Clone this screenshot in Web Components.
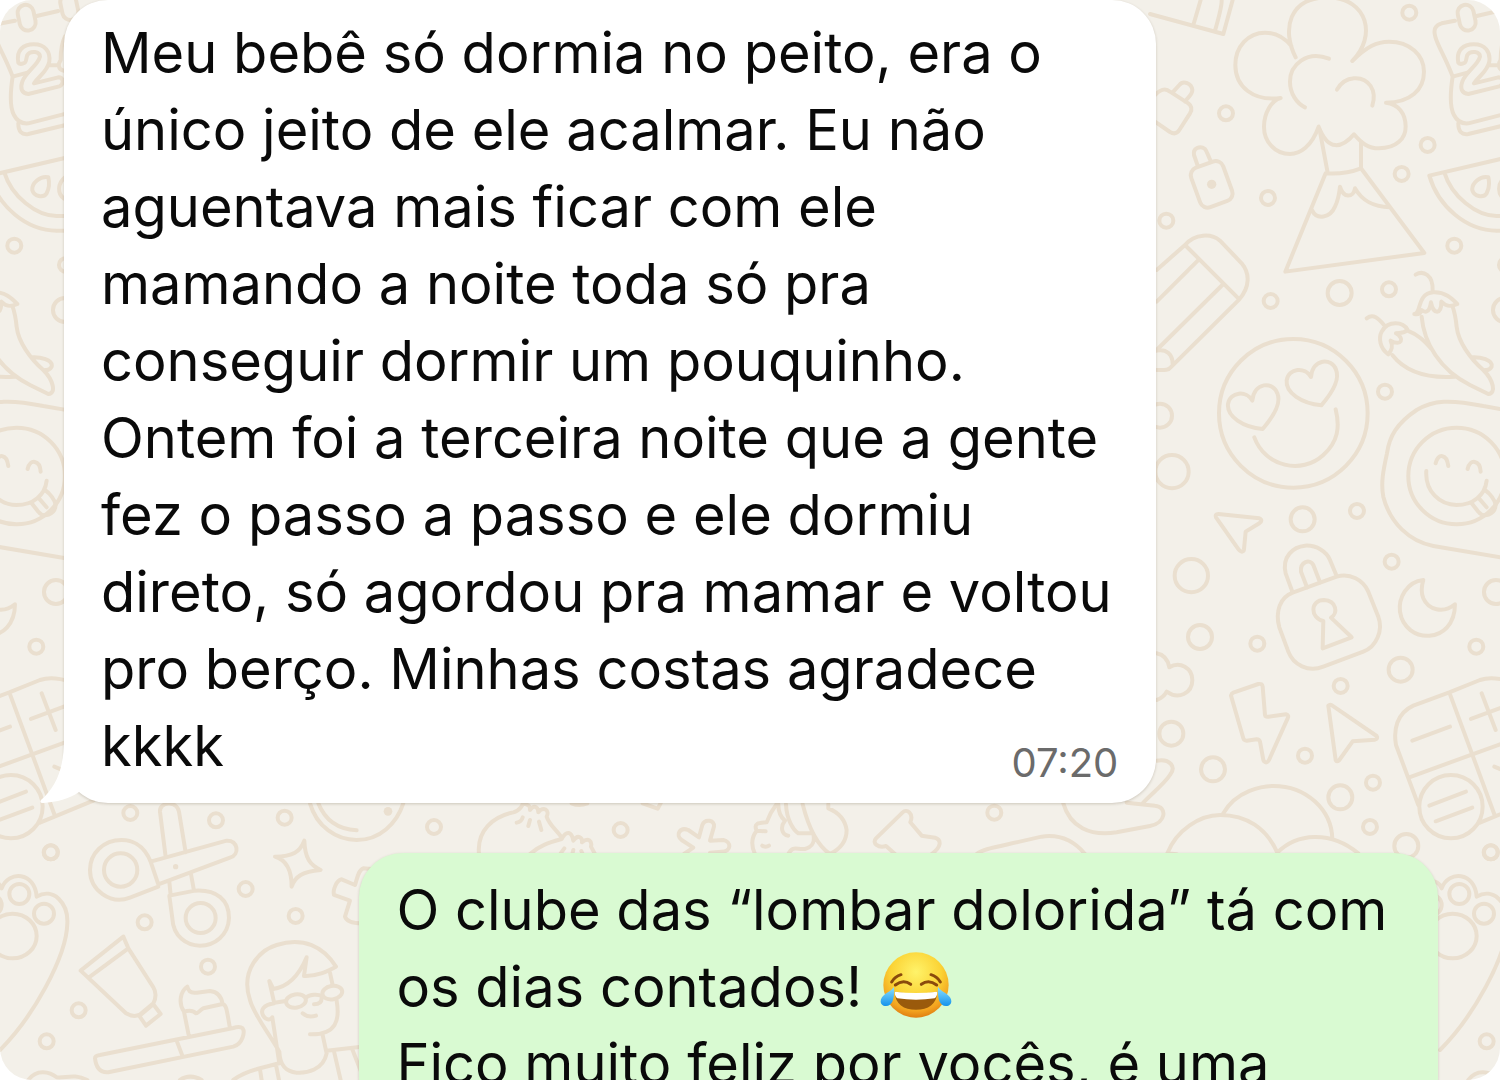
<!DOCTYPE html>
<html lang="pt-BR">
<head>
<meta charset="utf-8">
<meta name="viewport" content="width=device-width, initial-scale=1">
<title>Conversa</title>
<style>
body {
  margin: 0;
  background: #ffffff;
  font-family: Inter, "Liberation Sans", sans-serif;
}
</style>
</head>
<body>
<chat-screen>
  <chat-message side="in" time="07:20">Meu bebê só dormia no peito, era o
único jeito de ele acalmar. Eu não
aguentava mais ficar com ele
mamando a noite toda só pra
conseguir dormir um pouquinho.
Ontem foi a terceira noite que a gente
fez o passo a passo e ele dormiu
direto, só agordou pra mamar e voltou
pro berço. Minhas costas agradece
kkkk</chat-message>
  <chat-message side="out">O clube das “lombar dolorida” tá com
os dias contados! <joy-emoji></joy-emoji>
Fico muito feliz por vocês, é uma</chat-message>
</chat-screen>

<template id="wallpaper-template">
<style>
:host {
  display: block;
  position: absolute;
  inset: 0;
  overflow: hidden;
}

svg {
  display: block;
  width: 100%;
  height: 100%;
}

.doodles {
  fill: none;
  stroke: #eadfcf;
  stroke-width: 12;
  stroke-linecap: round;
  stroke-linejoin: round;
}

.dot {
  fill: #eadfcf;
  stroke: none;
}
</style>
<svg aria-hidden="true">
  <defs>
    <g id="tile" class="doodles">
      <!-- cloud, volcano, calendar, watermelon -->
      <g transform="translate(1150 0) scale(.3333)">
        <path d="M0 42L220 102L248 0M152 0L130 75M215 0Q216 20 195 92"/>
        <path d="M437 172C395 90 415 -8 535 -8C655 -5 680 110 607 183C650 140 680 125 717 125C780 125 822 165 822 215C822 270 780 308 708 308C745 312 767 340 767 380C767 415 740 445 687 445C655 445 635 430 612 403C575 445 535 455 506 380C485 440 450 462 420 462C375 462 342 425 342 380C342 340 365 300 392 294C310 305 256 260 256 195C256 140 295 98 345 98C380 98 405 115 424 138"/>
        <path d="M537 176C470 150 420 195 420 245C420 280 440 310 465 322M561 269C585 225 640 225 662 258C675 278 674 295 667 317"/>
        <path d="M509 390L533 518M633 425V505L823 759L406 815L527 520Q585 524 633 505M487 632C500 660 540 655 555 620C565 600 568 580 570 560C580 595 610 595 615 565C635 600 665 620 720 622"/>
        <path d="M915 62L875 70C855 75 850 90 856 110C862 135 890 180 908 230L955 217M908 230C902 270 898 320 912 345C922 365 935 372 955 370L1080 338M925 370C925 395 935 405 955 402L1080 372M980 48L1045 33"/>
        <rect x="926" y="14" width="48" height="78" rx="24" transform="rotate(-12 950 53)"/>
        <rect x="1054" y="-18" width="48" height="78" rx="24" transform="rotate(-12 1078 21)"/>
        <path d="M925 188C918 150 940 133 972 133C1005 133 1022 155 1018 185C1012 215 990 225 972 250L1045 232C1062 232 1062 254 1048 259L955 282C935 280 930 265 937 245C948 215 985 195 990 170C990 155 962 150 952 165C948 175 950 190 940 190Q930 194 925 188ZM1018 196H1045M1062 212C1042 210 1045 190 1052 180C1052 150 1055 130 1065 110"/>
        <path d="M1090 468L838 527C865 620 950 692 1040 692H1080M883 517C905 590 980 648 1040 648H1080"/>
        <path d="M1015 532C990 527 965 550 967 570C972 590 1000 595 1010 580C1018 565 1018 545 1015 532ZM1065 532C1042 550 1042 582 1062 596"/>
        <path d="M10 290C30 268 45 262 60 275L115 310C128 320 126 330 120 340L88 390C80 402 70 402 60 396L15 365M70 275L88 255C100 240 125 250 127 270C127 285 115 290 105 305"/>
        <rect x="134" y="490" width="102" height="126" rx="24" transform="rotate(-20 185 553)"/>
        <path d="M143 497L132 465C128 445 150 435 165 447C172 455 175 470 182 482"/>
        <circle class="dot" cx="185" cy="553" r="14"/>
        <path d="M20 810L105 735C135 700 185 700 210 722L275 790C300 820 300 860 268 898L62 1102C55 1112 40 1110 20 1110M105 735L268 898M20 905L147 778M20 1050L217 855M20 1052C50 1045 68 1065 68 1092"/>
        <circle cx="778" cy="38" r="21"/>
        <circle cx="228" cy="340" r="21"/>
        <circle cx="833" cy="435" r="21"/>
        <circle cx="755" cy="522" r="21"/>
        <circle cx="354" cy="594" r="21"/>
        <circle cx="49" cy="662" r="21"/>
        <circle cx="913" cy="737" r="21"/>
        <circle cx="1068" cy="795" r="21"/>
      </g>
      <!-- faces and chillies -->
      <g transform="translate(1150 270) scale(.3333)">
        <circle cx="430" cy="430" r="223"/>
        <path id="heart" d="M338 477C370 440 395 400 382 370C370 334 312 335 307 392C290 360 240 365 234 402C230 440 280 472 338 477Z"/>
        <use href="#heart" x="176" y="-71"/>
        <path d="M313 502C345 590 455 615 520 555C565 515 570 470 557 418"/>
        <path d="M797 14C820 0 850 15 848 62M793 132C815 130 800 70 850 67C885 65 905 85 922 102C905 110 890 112 874 95C875 135 850 135 843 97C838 130 825 128 815 120Q810 135 793 132M815 140C822 220 870 300 960 345L1015 372C1040 370 1030 330 1000 300C960 265 925 215 920 170C918 150 915 130 908 110M965 262C990 260 1030 270 1025 290Q1018 302 1005 300"/>
        <path d="M650 145C670 130 685 145 702 165M715 253C690 235 685 205 695 185C715 150 760 155 773 180C760 192 750 188 738 190C765 205 755 230 722 212C730 230 725 240 715 253ZM727 255C770 310 840 325 915 320M773 182C805 195 820 210 843 235"/>
        <path d="M1080 422L1000 408C900 388 850 390 800 420C740 460 718 500 711 550C700 600 692 640 700 680C720 760 780 815 850 828L1080 867"/>
        <circle cx="920" cy="618" r="145"/>
        <path d="M857 580C865 550 890 550 895 588M953 597C960 565 990 570 992 605M829 603C825 665 870 705 920 705C970 705 1005 675 1010 632M965 700L985 725C1000 745 1035 735 1037 705C1035 690 1020 670 1005 660M985 683L1010 712"/>
        <path d="M205 732L328 745Q340 750 328 760L287 785L282 838C280 850 270 845 264 836L198 742Q194 732 205 732Z"/>
        <circle cx="362" cy="93" r="21"/>
        <circle cx="717" cy="58" r="21"/>
        <circle cx="705" cy="365" r="21"/>
        <circle cx="621" cy="723" r="21"/>
        <circle cx="569" cy="69" r="36"/>
        <circle cx="458" cy="748" r="36"/>
        <circle cx="30" cy="437" r="36"/>
        <circle cx="1065" cy="120" r="36"/>
        <circle cx="66" cy="605" r="50"/>
      </g>
      <!-- padlock, moon, bolt, calculator, hills -->
      <g transform="translate(1150 540) scale(.3333)">
        <path d="M428 158L560 110C600 98 640 120 655 155L685 230C700 270 680 320 640 335L520 380C475 398 430 375 415 335L388 262C375 215 390 172 428 158Z"/>
        <path d="M427 155L407 100C395 50 430 20 465 17C500 15 530 35 540 60L560 108M471 142L453 95C450 65 480 55 490 75L510 127"/>
        <path d="M520 243C480 235 480 180 522 180C560 182 565 220 543 233L605 292L518 325Z"/>
        <path d="M820 120C770 125 745 175 750 215C765 315 915 315 915 193C880 222 835 210 820 175C812 155 814 140 820 120Z"/>
        <path d="M20 340C45 345 55 365 58 382C90 362 127 385 127 420C127 460 85 480 50 455C42 470 35 475 20 480"/>
        <path d="M243 467Q245 460 250 458L325 432Q337 430 338 440L345 525Q346 532 355 530L408 523Q418 525 413 535L357 660Q348 675 340 660L330 605Q328 598 320 598L290 602Q282 602 280 595Z"/>
        <path d="M535 497Q540 492 546 496L680 588Q685 596 675 599L608 604L568 660Q560 668 557 660Z"/>
        <path d="M898 457L990 420C1020 410 1050 415 1080 425M898 457L790 497C740 520 730 570 738 615L805 795M898 457L1035 828M778 712L1080 602M787 602L900 560M963 537L1070 497M995 460L1037 570M1033 680L1062 692M990 848L1150 782"/>
        <circle cx="903" cy="800" r="95"/>
        <path d="M838 797L948 755M857 844L967 803"/>
        <path d="M220 820C260 750 340 738 370 738C470 738 545 810 547 897M52 940C80 870 150 825 210 825C290 825 350 865 382 938C440 880 540 870 625 940M52 940L80 943"/>
        <circle cx="124" cy="107" r="50"/>
        <circle cx="150" cy="291" r="36"/>
        <circle cx="752" cy="389" r="36"/>
        <circle cx="1038" cy="156" r="36"/>
        <circle cx="64" cy="581" r="36"/>
        <circle cx="189" cy="688" r="36"/>
        <circle cx="571" cy="772" r="36"/>
        <circle cx="769" cy="918" r="36"/>
        <circle cx="725" cy="65" r="21"/>
        <circle cx="322" cy="311" r="21"/>
        <circle cx="979" cy="320" r="21"/>
        <circle cx="572" cy="438" r="21"/>
        <circle cx="465" cy="647" r="21"/>
        <circle cx="669" cy="728" r="21"/>
        <circle cx="660" cy="861" r="21"/>
        <circle cx="1023" cy="937" r="21"/>
      </g>
      <!-- fingers and pin -->
      <g transform="translate(850 740) scale(.3333)">
        <path d="M920 62C960 55 980 80 960 105C940 135 900 165 880 188M640 190C660 260 720 290 800 277L900 258C950 248 952 200 915 197L830 188"/>
        <path d="M380 342C400 325 440 322 575 290C630 282 670 300 705 342M135 342L108 318C85 325 65 310 78 295L158 217C170 205 192 220 181 247L215 287L255 293C275 300 275 320 245 342"/>
        <circle cx="433" cy="218" r="21"/>
      </g>
      <!-- hands, splat, portrait -->
      <g transform="translate(380 780) scale(.3333)">
        <path d="M297 222C290 150 340 110 400 97C420 92 430 72 428 70C450 75 450 80 450 90C465 70 475 85 475 97C490 78 510 90 500 110C508 135 525 145 545 172M450 222C480 195 510 187 545 177C560 150 575 155 580 182C595 160 608 175 606 187C625 170 637 185 633 200L645 222M428 112Q425 125 410 128M450 120L445 138M477 125L484 150M553 205L542 220M580 210L577 222M604 213L608 222M575 70Q598 80 622 70M788 70L833 86L842 70"/>
        <path d="M912 222L940 203L905 180C885 165 900 140 925 150L957 172L967 135C975 115 1005 120 1002 140L990 182L1030 180C1055 185 1055 215 1025 215L990 218"/>
        <path d="M1125 222C1110 190 1120 165 1130 152C1120 130 1135 128 1160 127C1170 100 1180 85 1190 72M1130 152L1157 154M1147 197Q1158 203 1167 197M1195 72C1195 95 1200 110 1215 122C1200 140 1205 165 1225 167M1218 72C1220 120 1240 150 1255 160L1300 160C1305 185 1300 200 1275 207C1250 210 1240 195 1225 222M1268 72C1285 140 1310 195 1350 222C1385 205 1400 180 1400 150C1395 115 1370 95 1345 85V72"/>
        <circle class="dot" cx="24" cy="94" r="13"/>
        <circle cx="162" cy="141" r="21"/>
        <circle cx="722" cy="150" r="21"/>
      </g>
      <!-- scissors, paw, toothbrush, reader -->
      <g transform="translate(0 790) scale(.3333)">
        <path d="M930 40C950 110 1010 150 1070 150C1140 150 1190 100 1210 40M955 40C975 90 1010 118 1070 121"/>
        <path d="M497 200L480 65C478 35 530 30 537 65L557 187M452 215L680 152C715 150 720 195 690 203L475 283ZM452 215C430 160 390 150 365 150C310 150 270 190 270 240C270 300 330 345 390 323L475 290M508 275L512 315M573 252L582 302M508 317L585 302C650 298 688 330 687 385C685 435 645 467 600 467C560 467 520 440 517 385Z"/>
        <circle cx="362" cy="240" r="50"/>
        <circle cx="602" cy="384" r="45"/>
        <circle class="dot" cx="527" cy="230" r="8"/>
        <path d="M913 152C915 205 930 225 962 240C905 245 885 260 875 290C875 240 860 210 825 200C880 200 900 185 913 152Z"/>
        <path d="M1115 237L1090 235C1075 240 1072 265 1065 285L1025 268C1010 270 998 300 1002 315L1050 332L1035 380C1040 395 1060 400 1085 400"/>
        <path d="M-30 275C-15 270 0 280 5 295C25 240 105 245 110 320C160 290 205 340 202 400C200 500 100 680 0 780"/>
        <circle cx="58" cy="312" r="30"/>
        <circle cx="132" cy="371" r="30"/>
        <circle cx="-25" cy="345" r="30"/>
        <ellipse cx="38" cy="438" rx="72" ry="67"/>
        <path d="M370 440L242 542L378 670C395 680 405 680 418 675L460 640C470 620 468 605 460 592L385 475ZM267 562L385 475M418 678L460 643L482 672L438 707Z"/>
        <path d="M285 805Q290 850 325 847L700 770C730 760 735 725 728 715Q720 708 700 714L300 795Q285 797 285 805ZM530 752L547 797M567 740L552 665C535 640 540 605 562 590C565 605 575 610 590 608L630 603C655 605 665 625 668 642L610 655C600 660 595 670 588 670C580 662 570 660 552 665M668 642C680 645 680 660 690 715"/>
        <path d="M838 785C800 720 760 670 750 630C720 540 780 480 830 465C910 440 970 470 1008 530C980 545 950 560 912 558L920 502C900 550 870 590 820 597L808 573L823 640C790 645 780 660 790 678C800 693 812 690 817 682L838 820M823 638L858 633M918 623C930 612 955 612 965 618M965 625C965 640 955 643 942 643M908 670Q925 685 948 677M990 548L998 585M1010 632C1020 690 1010 735 930 733M968 735L980 790C970 840 920 850 890 848C860 845 840 830 838 785M980 782L1085 770M838 820L780 835C740 845 720 855 700 870M780 838L785 870M828 825L837 870M1003 788L1022 870M1057 778L1085 850"/>
        <ellipse cx="888" cy="633" rx="30" ry="20" transform="rotate(-10 888 633)"/>
        <ellipse cx="997" cy="608" rx="30" ry="20" transform="rotate(-10 997 608)"/>
        <path d="M85 870C110 835 150 845 170 862C200 865 220 850 262 870M540 870Q570 850 605 870"/>
        <circle cx="391" cy="69" r="21"/>
        <circle cx="152" cy="187" r="21"/>
        <circle cx="854" cy="83" r="21"/>
        <circle cx="648" cy="91" r="21"/>
        <circle cx="737" cy="297" r="21"/>
        <circle cx="434" cy="397" r="21"/>
        <circle cx="887" cy="378" r="21"/>
        <circle cx="624" cy="530" r="21"/>
        <circle cx="236" cy="661" r="21"/>
        <circle cx="140" cy="754" r="21"/>
      </g>
    </g>
  </defs>
  <!-- the doodles repeat every 1440px -->
  <use href="#tile"/>
  <use href="#tile" x="-1440"/>
  <use href="#tile" x="1440"/>
</svg>
</template>

<template id="screen-template">
<style>
:host {
  display: block;
  position: relative;
  box-sizing: border-box;
  height: 100vh;
  overflow: hidden;
  border-radius: 32px;
  background: #f3f0e9;
}

.messages {
  position: relative;
  display: flex;
  flex-direction: column;
  gap: 50px;
  padding: 0 62px 0 64px;
}
</style>
<chat-wallpaper></chat-wallpaper>
<div class="messages"><slot></slot></div>
</template>

<template id="message-template">
<style>
:host {
  display: block;
  position: relative;
  box-sizing: border-box;
  border-radius: 44px;
  font-size: 56px;
  line-height: 77px;
  color: #0a0a0a;
  box-shadow: 0 1px 3px rgba(60, 40, 10, 0.2);
}

:host([side="in"]) {
  align-self: flex-start;
  width: 79.5%;
  padding: 15px 38px 18px 37px;
  background: #ffffff;
}

:host([side="out"]) {
  align-self: flex-end;
  width: 78.5%;
  padding: 19px 38px 19px 37px;
  background: #d9fad2;
}

p {
  margin: 0;
  white-space: pre;
}

time {
  float: right;
  margin-top: 33px;
  font-size: 40px;
  line-height: 44px;
  color: #6b6b6b;
}

.tail {
  position: absolute;
  left: -24px;
  bottom: 0;
}

:host([side="out"]) .tail,
time:empty {
  display: none;
}
</style>
<svg class="tail" width="66" height="64" viewBox="0 0 66 64" aria-hidden="true">
  <path d="M24 0C24 30 16 48 1 61Q-1 64 3 64C17 63 29 60 39 53L60 30V0Z" fill="#fff"/>
</svg>
<p><slot></slot><time></time></p>
</template>

<template id="joy-template">
<style>
:host {
  display: inline-block;
  width: 72px;
  height: 68px;
  margin-left: 2px;
  vertical-align: -12px;
  white-space: normal;
  line-height: 0;
}

svg {
  display: block;
}
</style>
<svg width="72" height="68" viewBox="0 0 216 204" role="img" aria-label="😂">
  <defs>
    <radialGradient id="face" cx=".5" cy=".3" r=".7">
      <stop offset="0" stop-color="#fff36a"/>
      <stop offset=".55" stop-color="#fbd335"/>
      <stop offset=".85" stop-color="#f3a31f"/>
      <stop offset="1" stop-color="#e07f12"/>
    </radialGradient>
    <linearGradient id="tear" x1="0" y1="0" x2="0" y2="1">
      <stop offset="0" stop-color="#8be0ff"/>
      <stop offset="1" stop-color="#1592ec"/>
    </linearGradient>
  </defs>
  <circle cx="108" cy="102" r="98" fill="url(#face)"/>
  <path d="M44 122Q108 134 172 122C170 160 145 176 108 176C71 176 46 160 44 122Z" fill="#9a5a0c"/>
  <path d="M44 122Q108 130 172 122Q172 136 164 142Q108 150 52 142Q44 136 44 122Z" fill="#fff"/>
  <g fill="none" stroke="#8a4a0c" stroke-width="9" stroke-linecap="round">
    <path d="M46 102Q70 84 92 100M124 100Q146 84 170 102M35 93Q45 76 63 71M153 71Q171 76 181 93"/>
  </g>
  <path d="M42 108C44 135 40 165 18 165C2 165 -2 150 6 139C14 127 30 123 42 108Z" fill="url(#tear)"/>
  <path d="M174 108C172 135 176 165 198 165C214 165 218 150 210 139C202 127 186 123 174 108Z" fill="url(#tear)"/>
</svg>
</template>

<script>
class ChatWallpaper extends HTMLElement {
  constructor() {
    super();
    const template = document.getElementById("wallpaper-template");
    this.attachShadow({ mode: "open" });
    this.shadowRoot.appendChild(template.content.cloneNode(true));
  }
}

class JoyEmoji extends HTMLElement {
  constructor() {
    super();
    const template = document.getElementById("joy-template");
    this.attachShadow({ mode: "open" });
    this.shadowRoot.appendChild(template.content.cloneNode(true));
  }
}

class ChatMessage extends HTMLElement {
  static get observedAttributes() {
    return ["time"];
  }

  constructor() {
    super();
    const template = document.getElementById("message-template");
    this.attachShadow({ mode: "open" });
    this.shadowRoot.appendChild(template.content.cloneNode(true));
    this.timeText = this.shadowRoot.querySelector("time");
    this.setTime();
  }

  attributeChangedCallback() {
    this.setTime();
  }

  setTime() {
    this.timeText.textContent = this.getAttribute("time") ?? "";
  }
}

class ChatScreen extends HTMLElement {
  constructor() {
    super();
    const template = document.getElementById("screen-template");
    this.attachShadow({ mode: "open" });
    this.shadowRoot.appendChild(template.content.cloneNode(true));
  }
}

customElements.define("chat-wallpaper", ChatWallpaper);
customElements.define("joy-emoji", JoyEmoji);
customElements.define("chat-message", ChatMessage);
customElements.define("chat-screen", ChatScreen);
</script>
</body>
</html>
